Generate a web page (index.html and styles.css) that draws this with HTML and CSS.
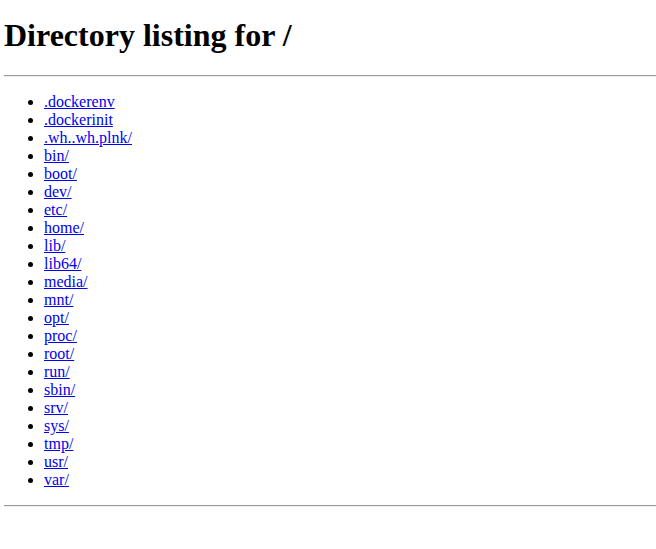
FILE: index.html
```html
<!DOCTYPE html>
<html>
<head>
<meta charset="utf-8">
<title>Directory listing for /</title>
<link rel="stylesheet" href="styles.css">
</head>
<body class="page">
<h1 class="title">Directory listing for /</h1>
<hr class="rule">
<ul class="listing">
<li><a href="#">.dockerenv</a></li>
<li><a href="#">.dockerinit</a></li>
<li><a href="#">.wh..wh.plnk/</a></li>
<li><a href="#">bin/</a></li>
<li><a href="#">boot/</a></li>
<li><a href="#">dev/</a></li>
<li><a href="#">etc/</a></li>
<li><a href="#">home/</a></li>
<li><a href="#">lib/</a></li>
<li><a href="#">lib64/</a></li>
<li><a href="#">media/</a></li>
<li><a href="#">mnt/</a></li>
<li><a href="#">opt/</a></li>
<li><a href="#">proc/</a></li>
<li><a href="#">root/</a></li>
<li><a href="#">run/</a></li>
<li><a href="#">sbin/</a></li>
<li><a href="#">srv/</a></li>
<li><a href="#">sys/</a></li>
<li><a href="#">tmp/</a></li>
<li><a href="#">usr/</a></li>
<li><a href="#">var/</a></li>
</ul>
<hr class="rule">
</body>
</html>
```

FILE: styles.css
```css
.page {
  margin: 0 0 8px 4px;
  font-family: "Liberation Serif", "Times New Roman", serif;
  font-size: 16px;
  color: #000;
  background: #fff;
}
.title {
  font-size: 32px;
  font-weight: bold;
  margin: 17px 0 21px;
}
.rule {
  margin: 8px 0;
  border: 0;
  border-top: 1px solid #9a9a9a;
  border-bottom: 1px solid #eee;
  height: 0;
}
.listing {
  margin: 16px 0;
  padding-left: 40px;
}
.listing a {
  color: #0000ee;
}
```
